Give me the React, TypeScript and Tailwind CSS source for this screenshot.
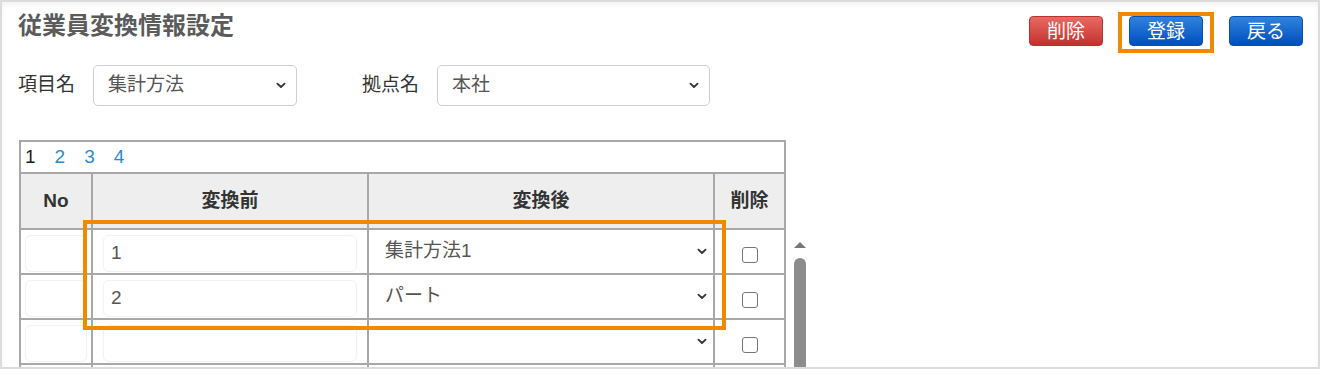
import { ReactNode } from "react";

const rows = [
  { before: "1", after: "集計方法1" },
  { before: "2", after: "パート" },
  { before: "", after: "" },
  { before: "", after: "" },
];

function Chevron({ className = "" }: { className?: string }) {
  return (
    <svg className={className} width="10" height="7" viewBox="0 0 10 7" fill="none">
      <path d="M1.4 1.6 5 5 8.6 1.6" stroke="#333" strokeWidth="1.8" strokeLinecap="round" strokeLinejoin="round" />
    </svg>
  );
}

function FakeSelect({ value, width }: { value: string; width: string }) {
  return (
    <div className={`flex h-[41px] ${width} items-center justify-between rounded-[5px] border border-[#cfcfcf] bg-white pl-[14px] pr-[10px] text-[19px] text-[#555]`}>
      <span>{value}</span>
      <Chevron />
    </div>
  );
}

function Button({ children, tone }: { children: ReactNode; tone: "red" | "blue" }) {
  return (
    <button
      type="button"
      className={
        tone === "red"
          ? "flex h-[30px] w-[74px] items-center justify-center rounded-[4px] border border-[#b9322e] bg-gradient-to-b from-[#e96964] to-[#c1302c] text-[19px] leading-none text-white"
          : "flex h-[30px] w-[74px] items-center justify-center rounded-[4px] border border-[#0b4db0] bg-gradient-to-b from-[#2f83dc] to-[#004dbf] text-[19px] leading-none text-white"
      }
    >
      {children}
    </button>
  );
}

export default function App() {
  return (
    <div className="h-[375px] w-[1323px] bg-white font-['Liberation_Sans','Noto_Sans_CJK_JP',sans-serif]">
      <div className="relative h-[369px] w-[1320px] overflow-hidden border-2 border-[#dcdcdc] bg-white shadow-[inset_0_3px_5px_rgba(0,0,0,0.05)]">
        <div className="flex items-start justify-between">
          <h1 className="ml-[16px] mt-[8px] text-[24px] font-bold leading-[32px] text-[#5b5b5b]">従業員変換情報設定</h1>
          <div className="mr-[15px] mt-[14px] flex gap-[26px]">
            <Button tone="red">削除</Button>
            <span className="relative">
              <Button tone="blue">登録</Button>
              <span className="absolute -bottom-[7px] -left-[11px] -right-[11px] -top-[4px] border-4 border-[#ef8a00]" />
            </span>
            <Button tone="blue">戻る</Button>
          </div>
        </div>

        <div className="mt-[19px] flex items-center pl-[16px] text-[19px] text-[#333]">
          <span>項目名</span>
          <div className="ml-[18px]">
            <FakeSelect value="集計方法" width="w-[204px]" />
          </div>
          <span className="ml-[65px]">拠点名</span>
          <div className="ml-[18px]">
            <FakeSelect value="本社" width="w-[273px]" />
          </div>
        </div>

        <div className="ml-[17px] mt-[34px] flex">
          <div className="w-[767px] border-2 border-b-0 border-[#a8a8a8]">
            <div className="flex h-[32px] items-center border-b-2 border-[#a8a8a8] pl-[4px] text-[19px]">
              <span className="mr-[19px] text-[#222]">1</span>
              <span className="mr-[19px] text-[#2b8ad3]">2</span>
              <span className="mr-[19px] text-[#2b8ad3]">3</span>
              <span className="text-[#2b8ad3]">4</span>
            </div>
            <div className="flex h-[56px] border-b-2 border-[#a8a8a8] bg-[#eeeeee] text-[19px] font-bold text-[#333]">
              <div className="flex w-[72px] items-center justify-center border-r-2 border-[#a8a8a8]">No</div>
              <div className="flex w-[276px] items-center justify-center border-r-2 border-[#a8a8a8]">変換前</div>
              <div className="flex w-[346px] items-center justify-center border-r-2 border-[#a8a8a8]">変換後</div>
              <div className="flex w-[69px] items-center justify-center">削除</div>
            </div>
            {rows.map((row, i) => (
              <div key={i} className="flex h-[45px] border-b-2 border-[#a8a8a8] text-[19px] text-[#555]">
                <div className="w-[72px] border-r-2 border-[#a8a8a8] pl-[4px] pt-[5px]">
                  <div className="h-[37px] w-[62px] rounded-[6px] border border-[#f2f2f2] shadow-[0_0_1px_rgba(0,0,0,0.06)]" />
                </div>
                <div className="w-[276px] border-r-2 border-[#a8a8a8] pl-[10px] pt-[5px]">
                  <div className="flex h-[37px] w-[254px] items-center rounded-[6px] border border-[#f2f2f2] pl-[7px] shadow-[0_0_1px_rgba(0,0,0,0.06)]">{row.before}</div>
                </div>
                <div className="flex w-[346px] items-center justify-between border-r-2 border-[#a8a8a8] pl-[16px] pr-[6px]">
                  <span>{row.after}</span>
                  <Chevron />
                </div>
                <div className="flex w-[69px] items-center justify-center pt-[6px]">
                  <span className="h-[16px] w-[16px] rounded-[3px] border-[1.5px] border-[#777] bg-white" />
                </div>
              </div>
            ))}
          </div>
          <div className="ml-[8px] flex w-[12px] flex-col pt-[102px]">
            <svg width="12" height="6" viewBox="0 0 12 6">
              <path d="M6 0 12 6H0Z" fill="#777" />
            </svg>
            <div className="mt-[10px] flex-1 rounded-t-full bg-[#8c8c8c]" />
          </div>
        </div>

        <div className="absolute left-[81px] top-[218px] h-[110px] w-[643px] border-4 border-[#ef8a00]" />
      </div>
    </div>
  );
}
